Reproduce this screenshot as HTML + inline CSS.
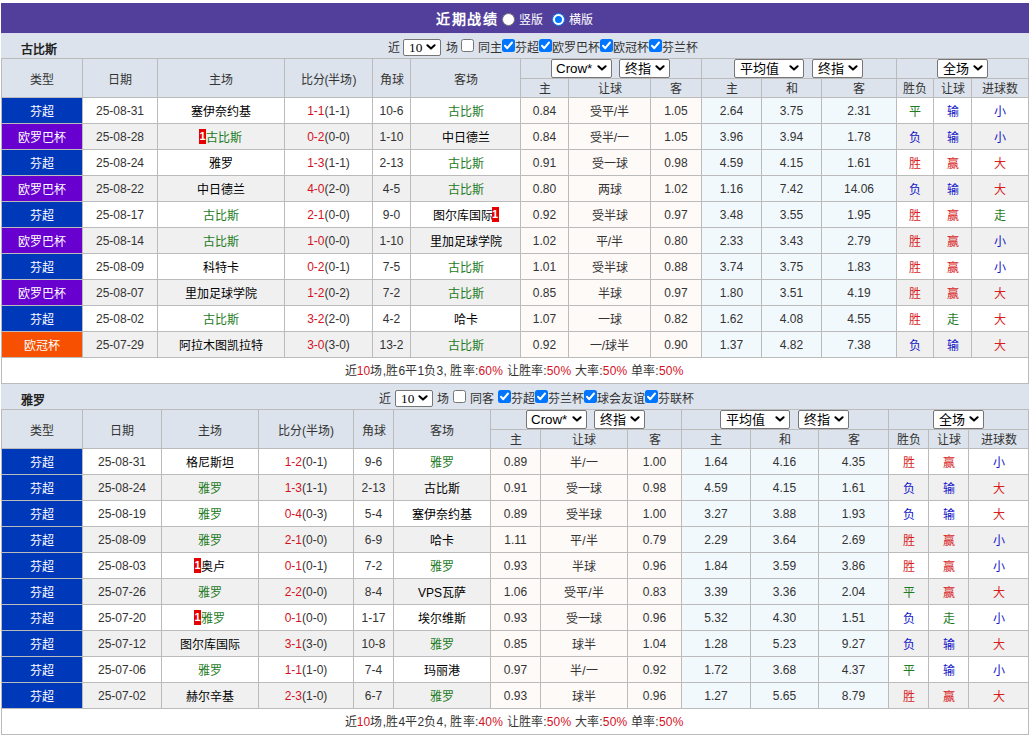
<!DOCTYPE html>
<html lang="zh-CN"><head><meta charset="utf-8"><title>近期战绩</title><style>
html,body{margin:0;padding:0;background:#fff}
body{width:1031px;height:736px;overflow:hidden;position:relative;font:12px/1 "Liberation Sans",sans-serif;color:#333}
.title{position:absolute;left:1px;top:3px;width:1028px;height:30px;background:#523f9b;color:#fff}
.title b{position:absolute;left:435px;top:8px;font-size:14px;letter-spacing:1.5px;line-height:16px;font-weight:bold}
.title .lb{position:absolute;top:10px;line-height:14px;font-size:12px}
.rd{position:absolute;top:10px;width:13px;height:13px;border-radius:50%;background:#fff;box-sizing:border-box}
.rd.on{border:1px solid #0075ff;background:#fff}
.rd.on:after{content:"";position:absolute;left:2px;top:2px;width:7px;height:7px;border-radius:50%;background:#0075ff}
.rd.off{border:1px solid #767676}
.team{position:absolute;left:1px;width:1028px;height:25px;background:#dde3ec}
.team .nm{position:absolute;left:20px;top:10px;font-weight:bold;color:#222;line-height:14px}
.team .x{position:absolute;top:8px;line-height:14px;white-space:nowrap;color:#333}
.cb{position:absolute;top:6px;width:13px;height:13px;box-sizing:border-box;border:1px solid #767676;border-radius:2.5px;background:#fff}
.cb.on{border:0;background:#0075ff}
.cb svg{display:block}
.sel{display:inline-block;position:relative;box-sizing:border-box;height:19px;border:1px solid #767676;border-radius:2px;background:#fff;vertical-align:top;text-align:left;color:#000;margin:0;font-size:13.33px;line-height:17px}
.sel .st{position:absolute;left:5px;top:0;font-size:13px}
.sel.en .st{left:4px;font-size:13.33px}
.sel .ch{position:absolute;right:4.5px;top:5px}
table.t{position:absolute;left:1px;width:1028px;border-collapse:separate;border-spacing:0;table-layout:fixed;border-top:1px solid #bbb;border-left:1px solid #bbb}
.t td,.t th{padding:0;border-right:1px solid #bbb;border-bottom:1px solid #bbb;text-align:center;white-space:nowrap;overflow:hidden;font-weight:normal;vertical-align:middle;box-sizing:border-box}
.t th{background:#dde3ec;color:#333}
.t tr.h1{height:20px}
.t tr.h2{height:19px}
.t tr.h1 th.sc{height:20px;line-height:0;font-size:0;padding:0;vertical-align:top;text-align:left}
.t tr.h2 th{height:19px;line-height:16px;padding-top:2px}
.t tr.h1 th{padding-top:4px}
.t tr.a td,.t tr.b td,.t tr.ft td{height:26px;line-height:23px;padding-top:2px}
.t tr td.lg,.t tr td.tm,.t tr td.hc,.t tr td.rs{padding-top:4px;line-height:21px}
.t tr.a td{background:#fff}
.t tr.b td{background:#f0f0f0}
.t td.lg{color:#fff}
.t td.tm{color:#000}
.t tr td.o1{background:#fefaf8}
.t tr td.o2{background:#f2f9fd}
.t tr.ft td{background:#fff;color:#333;letter-spacing:.2px;padding-right:2px}
.t tr.ft b{font-weight:normal;color:#d4111f}
.g{color:#1e7b1e}
.sr{color:#d4111f}
.rc{display:inline-block;background:#e60000;color:#fff;font-style:normal;font-weight:bold;font-size:11px;line-height:15px;width:7px;height:15px;vertical-align:top;position:relative;top:1px;text-align:center;margin-left:-1px}
.rs.r{color:#d81e1e}
.rs.b{color:#1414c8}
.rs.g{color:#1e7b1e}
</style></head><body>
<div class="title"><b>近期战绩</b><span class="rd off" style="left:501px"></span><span class="lb" style="left:518px">竖版</span><span class="rd on" style="left:551px"></span><span class="lb" style="left:568px">横版</span></div>
<div class="team" style="box-shadow:inset 0 1px 0 #dedbf1;top:33px"><span class="nm">古比斯</span><span class="x" style="left:387px">近</span><span class="sel s10" style="position:absolute;left:402px;top:6px;width:38px;height:17px;margin:0"><span class="st" style="font-family:'Liberation Serif',serif;left:5px;top:0;line-height:15px;font-size:13.33px">10</span><svg class="ch" style="top:4px" viewBox="0 0 10 6" width="10" height="6"><path d="M1.4 1.2 L5 4.6 L8.6 1.2" fill="none" stroke="#000" stroke-width="2" stroke-linecap="round" stroke-linejoin="round"/></svg></span><span class="x" style="left:445px">场</span><span style="left:460px" class="cb"></span><span class="x" style="left:477px">同主</span><span style="left:501px" class="cb on"><svg viewBox="0 0 13 13" width="13" height="13"><path d="M3 6.8 L5.3 9.2 L10 3.5" fill="none" stroke="#fff" stroke-width="2" stroke-linecap="round" stroke-linejoin="round"/></svg></span><span class="x" style="left:514px">芬超</span><span style="left:538px" class="cb on"><svg viewBox="0 0 13 13" width="13" height="13"><path d="M3 6.8 L5.3 9.2 L10 3.5" fill="none" stroke="#fff" stroke-width="2" stroke-linecap="round" stroke-linejoin="round"/></svg></span><span class="x" style="left:551px">欧罗巴杯</span><span style="left:599px" class="cb on"><svg viewBox="0 0 13 13" width="13" height="13"><path d="M3 6.8 L5.3 9.2 L10 3.5" fill="none" stroke="#fff" stroke-width="2" stroke-linecap="round" stroke-linejoin="round"/></svg></span><span class="x" style="left:612px">欧冠杯</span><span style="left:648px" class="cb on"><svg viewBox="0 0 13 13" width="13" height="13"><path d="M3 6.8 L5.3 9.2 L10 3.5" fill="none" stroke="#fff" stroke-width="2" stroke-linecap="round" stroke-linejoin="round"/></svg></span><span class="x" style="left:661px">芬兰杯</span></div>
<table class="t" style="top:58px"><colgroup><col style="width:81px"><col style="width:75px"><col style="width:127px"><col style="width:88px"><col style="width:38px"><col style="width:110px"><col style="width:48px"><col style="width:82px"><col style="width:51px"><col style="width:60px"><col style="width:60px"><col style="width:75px"><col style="width:37px"><col style="width:38px"><col style="width:57px"></colgroup>
<tr class="h1"><th rowspan="2">类型</th><th rowspan="2">日期</th><th rowspan="2">主场</th><th rowspan="2">比分(半场)</th><th rowspan="2">角球</th><th rowspan="2">客场</th>
<th colspan="3" class="sc" style="padding-left:30px"><span class="sel en" style="width:61px;margin-right:7px"><span class="st">Crow*</span><svg class="ch" viewBox="0 0 10 6" width="10" height="6"><path d="M1.4 1.2 L5 4.6 L8.6 1.2" fill="none" stroke="#000" stroke-width="2" stroke-linecap="round" stroke-linejoin="round"/></svg></span><span class="sel " style="width:51px;margin-right:0px"><span class="st">终指</span><svg class="ch" viewBox="0 0 10 6" width="10" height="6"><path d="M1.4 1.2 L5 4.6 L8.6 1.2" fill="none" stroke="#000" stroke-width="2" stroke-linecap="round" stroke-linejoin="round"/></svg></span></th>
<th colspan="3" class="sc" style="padding-left:32px"><span class="sel " style="width:70px;margin-right:8px"><span class="st">平均值</span><svg class="ch" viewBox="0 0 10 6" width="10" height="6"><path d="M1.4 1.2 L5 4.6 L8.6 1.2" fill="none" stroke="#000" stroke-width="2" stroke-linecap="round" stroke-linejoin="round"/></svg></span><span class="sel " style="width:51px;margin-right:0px"><span class="st">终指</span><svg class="ch" viewBox="0 0 10 6" width="10" height="6"><path d="M1.4 1.2 L5 4.6 L8.6 1.2" fill="none" stroke="#000" stroke-width="2" stroke-linecap="round" stroke-linejoin="round"/></svg></span></th>
<th colspan="3" class="sc" style="padding-left:40px"><span class="sel " style="width:51px;margin-right:0px"><span class="st">全场</span><svg class="ch" viewBox="0 0 10 6" width="10" height="6"><path d="M1.4 1.2 L5 4.6 L8.6 1.2" fill="none" stroke="#000" stroke-width="2" stroke-linecap="round" stroke-linejoin="round"/></svg></span></th></tr>
<tr class="h2"><th>主</th><th>让球</th><th>客</th><th>主</th><th>和</th><th>客</th><th>胜负</th><th>让球</th><th>进球数</th></tr>
<tr class="a"><td class="lg" style="background:#0038ba">芬超</td><td>25-08-31</td><td class="tm">塞伊奈约基</td><td><span class="sr">1-1</span>(1-1)</td><td>10-6</td><td class="tm"><span class="g">古比斯</span></td>
<td class="o1">0.84</td><td class="o1 hc">受平/半</td><td class="o1">1.05</td><td class="o2">2.64</td><td class="o2">3.75</td><td class="o2">2.31</td>
<td class="rs g">平</td><td class="rs b">输</td><td class="rs b">小</td></tr>
<tr class="b"><td class="lg" style="background:#6800d0">欧罗巴杯</td><td>25-08-28</td><td class="tm"><i class="rc">1</i><span class="g">古比斯</span></td><td><span class="sr">0-2</span>(0-0)</td><td>1-10</td><td class="tm">中日德兰</td>
<td class="o1">0.84</td><td class="o1 hc">受半/一</td><td class="o1">1.05</td><td class="o2">3.96</td><td class="o2">3.94</td><td class="o2">1.78</td>
<td class="rs b">负</td><td class="rs b">输</td><td class="rs b">小</td></tr>
<tr class="a"><td class="lg" style="background:#0038ba">芬超</td><td>25-08-24</td><td class="tm">雅罗</td><td><span class="sr">1-3</span>(1-1)</td><td>2-13</td><td class="tm"><span class="g">古比斯</span></td>
<td class="o1">0.91</td><td class="o1 hc">受一球</td><td class="o1">0.98</td><td class="o2">4.59</td><td class="o2">4.15</td><td class="o2">1.61</td>
<td class="rs r">胜</td><td class="rs r">赢</td><td class="rs r">大</td></tr>
<tr class="b"><td class="lg" style="background:#6800d0">欧罗巴杯</td><td>25-08-22</td><td class="tm">中日德兰</td><td><span class="sr">4-0</span>(2-0)</td><td>4-5</td><td class="tm"><span class="g">古比斯</span></td>
<td class="o1">0.80</td><td class="o1 hc">两球</td><td class="o1">1.02</td><td class="o2">1.16</td><td class="o2">7.42</td><td class="o2">14.06</td>
<td class="rs b">负</td><td class="rs b">输</td><td class="rs r">大</td></tr>
<tr class="a"><td class="lg" style="background:#0038ba">芬超</td><td>25-08-17</td><td class="tm"><span class="g">古比斯</span></td><td><span class="sr">2-1</span>(0-0)</td><td>9-0</td><td class="tm">图尔库国际<i class="rc">1</i></td>
<td class="o1">0.92</td><td class="o1 hc">受半球</td><td class="o1">0.97</td><td class="o2">3.48</td><td class="o2">3.55</td><td class="o2">1.95</td>
<td class="rs r">胜</td><td class="rs r">赢</td><td class="rs g">走</td></tr>
<tr class="b"><td class="lg" style="background:#6800d0">欧罗巴杯</td><td>25-08-14</td><td class="tm"><span class="g">古比斯</span></td><td><span class="sr">1-0</span>(0-0)</td><td>1-10</td><td class="tm">里加足球学院</td>
<td class="o1">1.02</td><td class="o1 hc">平/半</td><td class="o1">0.80</td><td class="o2">2.33</td><td class="o2">3.43</td><td class="o2">2.79</td>
<td class="rs r">胜</td><td class="rs r">赢</td><td class="rs b">小</td></tr>
<tr class="a"><td class="lg" style="background:#0038ba">芬超</td><td>25-08-09</td><td class="tm">科特卡</td><td><span class="sr">0-2</span>(0-1)</td><td>7-5</td><td class="tm"><span class="g">古比斯</span></td>
<td class="o1">1.01</td><td class="o1 hc">受半球</td><td class="o1">0.88</td><td class="o2">3.74</td><td class="o2">3.75</td><td class="o2">1.83</td>
<td class="rs r">胜</td><td class="rs r">赢</td><td class="rs b">小</td></tr>
<tr class="b"><td class="lg" style="background:#6800d0">欧罗巴杯</td><td>25-08-07</td><td class="tm">里加足球学院</td><td><span class="sr">1-2</span>(0-2)</td><td>7-2</td><td class="tm"><span class="g">古比斯</span></td>
<td class="o1">0.85</td><td class="o1 hc">半球</td><td class="o1">0.97</td><td class="o2">1.80</td><td class="o2">3.51</td><td class="o2">4.19</td>
<td class="rs r">胜</td><td class="rs r">赢</td><td class="rs r">大</td></tr>
<tr class="a"><td class="lg" style="background:#0038ba">芬超</td><td>25-08-02</td><td class="tm"><span class="g">古比斯</span></td><td><span class="sr">3-2</span>(2-0)</td><td>4-2</td><td class="tm">哈卡</td>
<td class="o1">1.07</td><td class="o1 hc">一球</td><td class="o1">0.82</td><td class="o2">1.62</td><td class="o2">4.08</td><td class="o2">4.55</td>
<td class="rs r">胜</td><td class="rs g">走</td><td class="rs r">大</td></tr>
<tr class="b"><td class="lg" style="background:#f75000">欧冠杯</td><td>25-07-29</td><td class="tm">阿拉木图凯拉特</td><td><span class="sr">3-0</span>(3-0)</td><td>13-2</td><td class="tm"><span class="g">古比斯</span></td>
<td class="o1">0.92</td><td class="o1 hc">一/球半</td><td class="o1">0.90</td><td class="o2">1.37</td><td class="o2">4.82</td><td class="o2">7.38</td>
<td class="rs b">负</td><td class="rs b">输</td><td class="rs r">大</td></tr>
<tr class="ft"><td colspan="15">近<b>10</b>场,胜6平1负3, 胜率:<b>60%</b> 让胜率:<b>50%</b> 大率:<b>50%</b> 单率:<b>50%</b></td></tr>
</table>
<div class="team" style="top:384px"><span class="nm">雅罗</span><span class="x" style="left:378px">近</span><span class="sel s10" style="position:absolute;left:394px;top:6px;width:38px;height:17px;margin:0"><span class="st" style="font-family:'Liberation Serif',serif;left:5px;top:0;line-height:15px;font-size:13.33px">10</span><svg class="ch" style="top:4px" viewBox="0 0 10 6" width="10" height="6"><path d="M1.4 1.2 L5 4.6 L8.6 1.2" fill="none" stroke="#000" stroke-width="2" stroke-linecap="round" stroke-linejoin="round"/></svg></span><span class="x" style="left:436px">场</span><span style="left:452px" class="cb"></span><span class="x" style="left:469px">同客</span><span style="left:497px" class="cb on"><svg viewBox="0 0 13 13" width="13" height="13"><path d="M3 6.8 L5.3 9.2 L10 3.5" fill="none" stroke="#fff" stroke-width="2" stroke-linecap="round" stroke-linejoin="round"/></svg></span><span class="x" style="left:510px">芬超</span><span style="left:534px" class="cb on"><svg viewBox="0 0 13 13" width="13" height="13"><path d="M3 6.8 L5.3 9.2 L10 3.5" fill="none" stroke="#fff" stroke-width="2" stroke-linecap="round" stroke-linejoin="round"/></svg></span><span class="x" style="left:547px">芬兰杯</span><span style="left:583px" class="cb on"><svg viewBox="0 0 13 13" width="13" height="13"><path d="M3 6.8 L5.3 9.2 L10 3.5" fill="none" stroke="#fff" stroke-width="2" stroke-linecap="round" stroke-linejoin="round"/></svg></span><span class="x" style="left:596px">球会友谊</span><span style="left:644px" class="cb on"><svg viewBox="0 0 13 13" width="13" height="13"><path d="M3 6.8 L5.3 9.2 L10 3.5" fill="none" stroke="#fff" stroke-width="2" stroke-linecap="round" stroke-linejoin="round"/></svg></span><span class="x" style="left:657px">芬联杯</span></div>
<table class="t" style="top:409px"><colgroup><col style="width:81px"><col style="width:79px"><col style="width:97px"><col style="width:95px"><col style="width:40px"><col style="width:97px"><col style="width:50px"><col style="width:87px"><col style="width:54px"><col style="width:69px"><col style="width:68px"><col style="width:70px"><col style="width:40px"><col style="width:40px"><col style="width:60px"></colgroup>
<tr class="h1"><th rowspan="2">类型</th><th rowspan="2">日期</th><th rowspan="2">主场</th><th rowspan="2">比分(半场)</th><th rowspan="2">角球</th><th rowspan="2">客场</th>
<th colspan="3" class="sc" style="padding-left:35px"><span class="sel en" style="width:61px;margin-right:7px"><span class="st">Crow*</span><svg class="ch" viewBox="0 0 10 6" width="10" height="6"><path d="M1.4 1.2 L5 4.6 L8.6 1.2" fill="none" stroke="#000" stroke-width="2" stroke-linecap="round" stroke-linejoin="round"/></svg></span><span class="sel " style="width:51px;margin-right:0px"><span class="st">终指</span><svg class="ch" viewBox="0 0 10 6" width="10" height="6"><path d="M1.4 1.2 L5 4.6 L8.6 1.2" fill="none" stroke="#000" stroke-width="2" stroke-linecap="round" stroke-linejoin="round"/></svg></span></th>
<th colspan="3" class="sc" style="padding-left:38px"><span class="sel " style="width:70px;margin-right:8px"><span class="st">平均值</span><svg class="ch" viewBox="0 0 10 6" width="10" height="6"><path d="M1.4 1.2 L5 4.6 L8.6 1.2" fill="none" stroke="#000" stroke-width="2" stroke-linecap="round" stroke-linejoin="round"/></svg></span><span class="sel " style="width:51px;margin-right:0px"><span class="st">终指</span><svg class="ch" viewBox="0 0 10 6" width="10" height="6"><path d="M1.4 1.2 L5 4.6 L8.6 1.2" fill="none" stroke="#000" stroke-width="2" stroke-linecap="round" stroke-linejoin="round"/></svg></span></th>
<th colspan="3" class="sc" style="padding-left:44px"><span class="sel " style="width:51px;margin-right:0px"><span class="st">全场</span><svg class="ch" viewBox="0 0 10 6" width="10" height="6"><path d="M1.4 1.2 L5 4.6 L8.6 1.2" fill="none" stroke="#000" stroke-width="2" stroke-linecap="round" stroke-linejoin="round"/></svg></span></th></tr>
<tr class="h2"><th>主</th><th>让球</th><th>客</th><th>主</th><th>和</th><th>客</th><th>胜负</th><th>让球</th><th>进球数</th></tr>
<tr class="a"><td class="lg" style="background:#0038ba">芬超</td><td>25-08-31</td><td class="tm">格尼斯坦</td><td><span class="sr">1-2</span>(0-1)</td><td>9-6</td><td class="tm"><span class="g">雅罗</span></td>
<td class="o1">0.89</td><td class="o1 hc">半/一</td><td class="o1">1.00</td><td class="o2">1.64</td><td class="o2">4.16</td><td class="o2">4.35</td>
<td class="rs r">胜</td><td class="rs r">赢</td><td class="rs b">小</td></tr>
<tr class="b"><td class="lg" style="background:#0038ba">芬超</td><td>25-08-24</td><td class="tm"><span class="g">雅罗</span></td><td><span class="sr">1-3</span>(1-1)</td><td>2-13</td><td class="tm">古比斯</td>
<td class="o1">0.91</td><td class="o1 hc">受一球</td><td class="o1">0.98</td><td class="o2">4.59</td><td class="o2">4.15</td><td class="o2">1.61</td>
<td class="rs b">负</td><td class="rs b">输</td><td class="rs r">大</td></tr>
<tr class="a"><td class="lg" style="background:#0038ba">芬超</td><td>25-08-19</td><td class="tm"><span class="g">雅罗</span></td><td><span class="sr">0-4</span>(0-3)</td><td>5-4</td><td class="tm">塞伊奈约基</td>
<td class="o1">0.89</td><td class="o1 hc">受半球</td><td class="o1">1.00</td><td class="o2">3.27</td><td class="o2">3.88</td><td class="o2">1.93</td>
<td class="rs b">负</td><td class="rs b">输</td><td class="rs r">大</td></tr>
<tr class="b"><td class="lg" style="background:#0038ba">芬超</td><td>25-08-09</td><td class="tm"><span class="g">雅罗</span></td><td><span class="sr">2-1</span>(0-0)</td><td>6-9</td><td class="tm">哈卡</td>
<td class="o1">1.11</td><td class="o1 hc">平/半</td><td class="o1">0.79</td><td class="o2">2.29</td><td class="o2">3.64</td><td class="o2">2.69</td>
<td class="rs r">胜</td><td class="rs r">赢</td><td class="rs b">小</td></tr>
<tr class="a"><td class="lg" style="background:#0038ba">芬超</td><td>25-08-03</td><td class="tm"><i class="rc">1</i>奥卢</td><td><span class="sr">0-1</span>(0-1)</td><td>7-2</td><td class="tm"><span class="g">雅罗</span></td>
<td class="o1">0.93</td><td class="o1 hc">半球</td><td class="o1">0.96</td><td class="o2">1.84</td><td class="o2">3.59</td><td class="o2">3.86</td>
<td class="rs r">胜</td><td class="rs r">赢</td><td class="rs b">小</td></tr>
<tr class="b"><td class="lg" style="background:#0038ba">芬超</td><td>25-07-26</td><td class="tm"><span class="g">雅罗</span></td><td><span class="sr">2-2</span>(0-0)</td><td>8-4</td><td class="tm">VPS瓦萨</td>
<td class="o1">1.06</td><td class="o1 hc">受平/半</td><td class="o1">0.83</td><td class="o2">3.39</td><td class="o2">3.36</td><td class="o2">2.04</td>
<td class="rs g">平</td><td class="rs r">赢</td><td class="rs r">大</td></tr>
<tr class="a"><td class="lg" style="background:#0038ba">芬超</td><td>25-07-20</td><td class="tm"><i class="rc">1</i><span class="g">雅罗</span></td><td><span class="sr">0-1</span>(0-0)</td><td>1-17</td><td class="tm">埃尔维斯</td>
<td class="o1">0.93</td><td class="o1 hc">受一球</td><td class="o1">0.96</td><td class="o2">5.32</td><td class="o2">4.30</td><td class="o2">1.51</td>
<td class="rs b">负</td><td class="rs g">走</td><td class="rs b">小</td></tr>
<tr class="b"><td class="lg" style="background:#0038ba">芬超</td><td>25-07-12</td><td class="tm">图尔库国际</td><td><span class="sr">3-1</span>(3-0)</td><td>10-8</td><td class="tm"><span class="g">雅罗</span></td>
<td class="o1">0.85</td><td class="o1 hc">球半</td><td class="o1">1.04</td><td class="o2">1.28</td><td class="o2">5.23</td><td class="o2">9.27</td>
<td class="rs b">负</td><td class="rs b">输</td><td class="rs r">大</td></tr>
<tr class="a"><td class="lg" style="background:#0038ba">芬超</td><td>25-07-06</td><td class="tm"><span class="g">雅罗</span></td><td><span class="sr">1-1</span>(1-0)</td><td>7-4</td><td class="tm">玛丽港</td>
<td class="o1">0.97</td><td class="o1 hc">半/一</td><td class="o1">0.92</td><td class="o2">1.72</td><td class="o2">3.68</td><td class="o2">4.37</td>
<td class="rs g">平</td><td class="rs b">输</td><td class="rs b">小</td></tr>
<tr class="b"><td class="lg" style="background:#0038ba">芬超</td><td>25-07-02</td><td class="tm">赫尔辛基</td><td><span class="sr">2-3</span>(1-0)</td><td>6-7</td><td class="tm"><span class="g">雅罗</span></td>
<td class="o1">0.93</td><td class="o1 hc">球半</td><td class="o1">0.96</td><td class="o2">1.27</td><td class="o2">5.65</td><td class="o2">8.79</td>
<td class="rs r">胜</td><td class="rs r">赢</td><td class="rs r">大</td></tr>
<tr class="ft"><td colspan="15">近<b>10</b>场,胜4平2负4, 胜率:<b>40%</b> 让胜率:<b>50%</b> 大率:<b>50%</b> 单率:<b>50%</b></td></tr>
</table>
</body></html>
